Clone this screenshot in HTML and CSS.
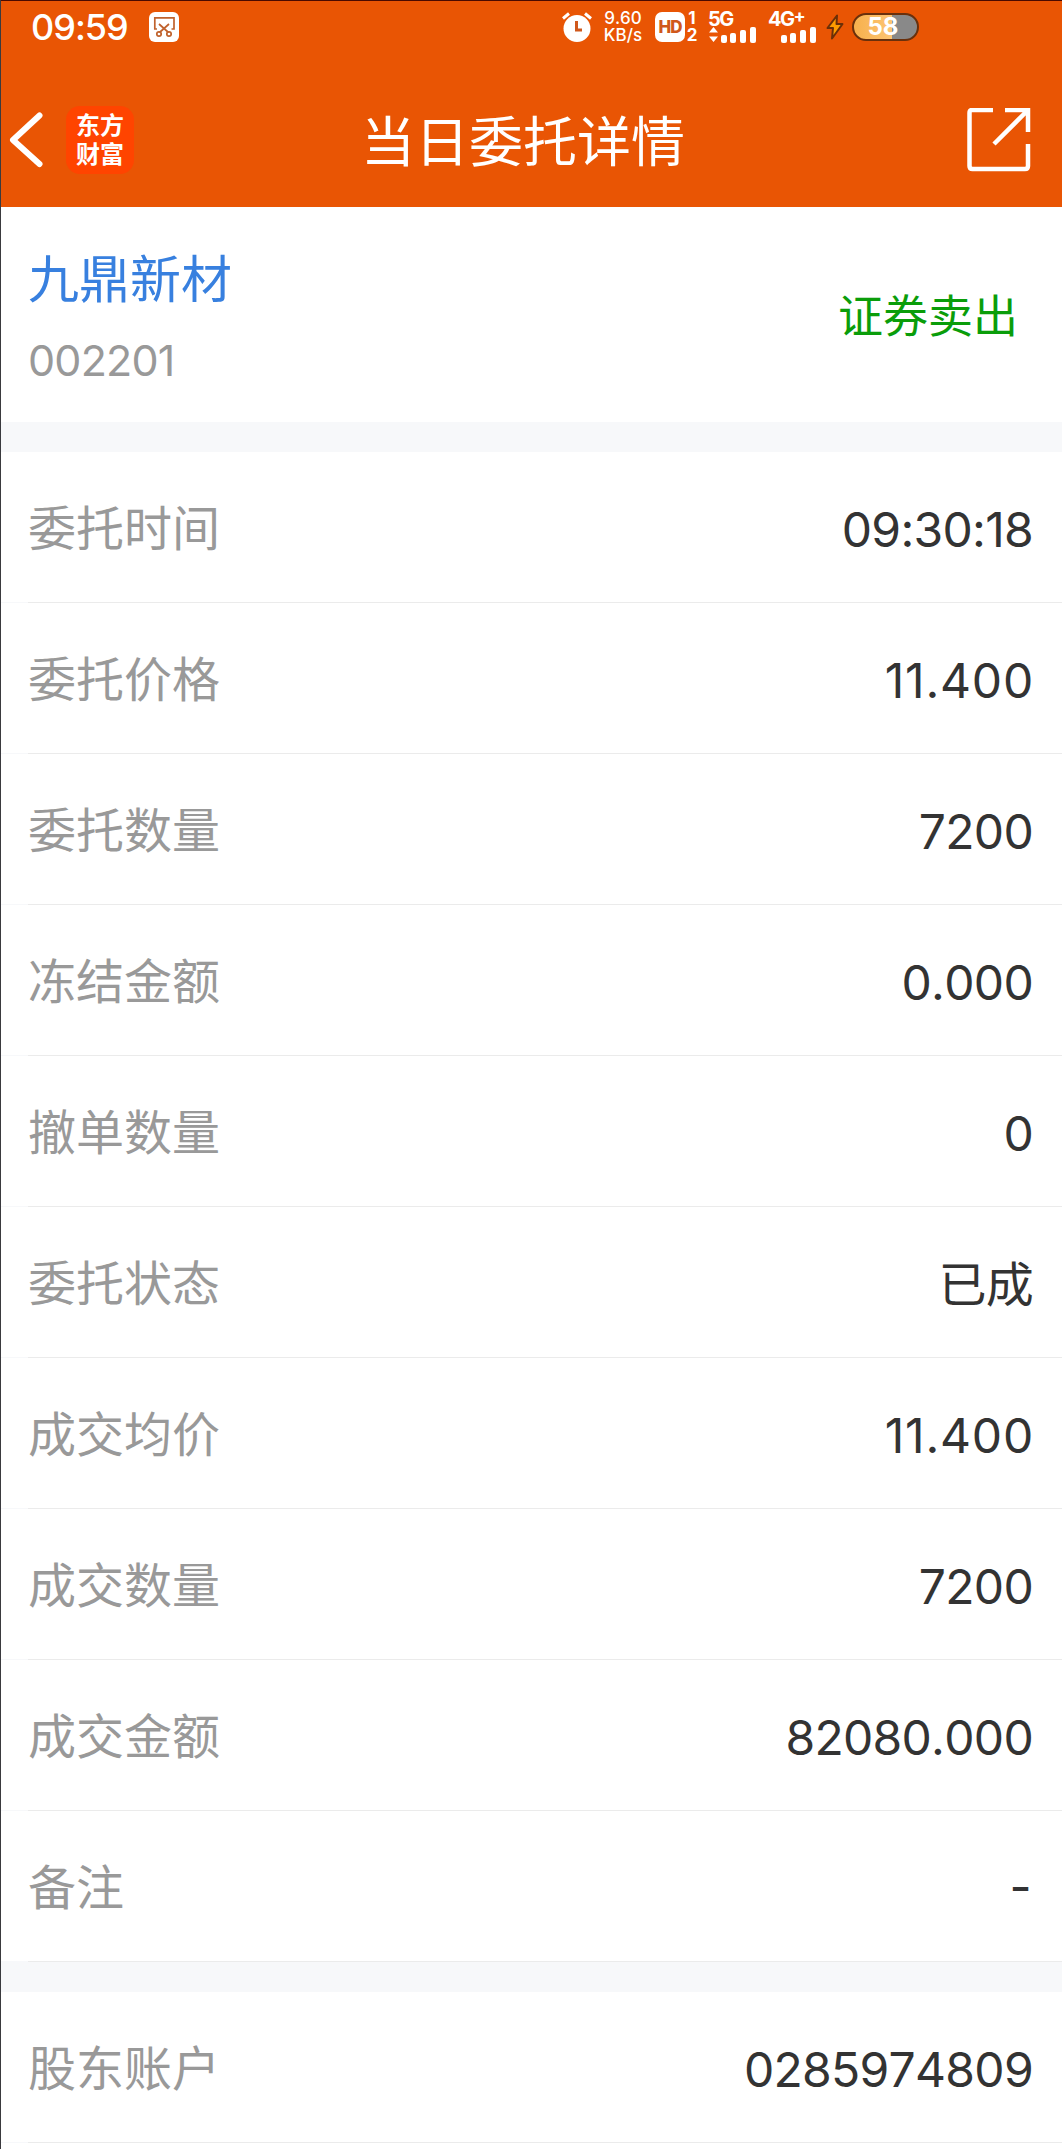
FILE: index.html
```html
<!DOCTYPE html>
<html lang="zh-CN">
<head>
  <meta charset="utf-8">
  <title>当日委托详情</title>
  <link rel="stylesheet" href="styles.css">
</head>
<body>
  <div class="page">
    <header class="header">
      <div class="status-bar">
        <span class="clock">09:59</span>
        <svg class="clip-icon" width="30" height="30" viewBox="0 0 30 30">
          <rect width="30" height="30" rx="6" fill="#fff"/>
          <g fill="none" stroke="#c0622d" stroke-width="1.7">
            <path d="M8 17H5.8V5.8H25V17H22.500"/>
            <path d="M10 12L19.500 20.500M20 12L10.500 20.500"/>
            <circle cx="10" cy="22" r="2.200"/>
            <circle cx="20" cy="22" r="2.200"/>
          </g>
        </svg>
        <svg class="alarm-icon" width="30" height="30" viewBox="0 0 30 30">
          <circle cx="15" cy="16.500" r="13.500" fill="#fff"/>
          <path d="M1 6.500L7 1.500M29 6.500L23 1.500" stroke="#fff" stroke-width="3"/>
          <path d="M14.500 9V18H20" fill="none" stroke="#d0581c" stroke-width="3"/>
        </svg>
        <div class="speed"><span>9.60</span><span>KB/s</span></div>
        <span class="hd">HD</span>
        <div class="sims"><span>1</span><span>2</span></div>
        <div class="signal signal-5g">
          <span>5G</span>
          <svg width="48" height="17" viewBox="0 0 48 17" fill="#fff">
            <path d="M1 6.500L5.500 1L10 6.500ZM1 10.500H10L5.500 16Z"/>
            <rect x="13" y="9" width="6" height="8" rx="2"/>
            <rect x="22" y="7" width="6" height="10" rx="2"/>
            <rect x="32" y="4" width="6" height="13" rx="2"/>
            <rect x="42" y="1" width="6" height="16" rx="2"/>
          </svg>
        </div>
        <div class="signal signal-4g">
          <span>4G<sup>+</sup></span>
          <svg width="48" height="17" viewBox="0 0 48 17" fill="#fff">
            <rect x="13" y="9" width="6" height="8" rx="2"/>
            <rect x="22" y="7" width="6" height="10" rx="2"/>
            <rect x="32" y="4" width="6" height="13" rx="2"/>
            <rect x="42" y="1" width="6" height="16" rx="2"/>
          </svg>
        </div>
        <svg class="bolt-icon" width="18" height="26" viewBox="0 0 18 26">
          <path d="M11 1.500L1.500 14H7L6 24.500L16.500 10H10.500Z" fill="#ff9c00" stroke="#6b2f08" stroke-width="2" stroke-linejoin="round"/>
        </svg>
        <span class="battery">58</span>
      </div>
      <div class="nav-bar">
        <svg class="back-icon" width="34" height="56" viewBox="0 0 34 56">
          <path d="M30.500 3.500L4 28L30.500 52" fill="none" stroke="#fff" stroke-width="6" stroke-linecap="round" stroke-linejoin="round"/>
        </svg>
        <div class="logo"><span>东方</span><span>财富</span></div>
        <h1 class="title">当日委托详情</h1>
        <svg class="share-icon" width="64" height="64" viewBox="0 0 64 64">
          <path d="M26 2H5Q2.500 2 2.500 5V58Q2.500 61 5.500 61H58Q61 61 61 58V36M38 2H61V24M60 3L27 36" fill="none" stroke="#fff" stroke-width="4.500"/>
        </svg>
      </div>
    </header>

    <section class="stock">
      <div>
        <div class="stock-name">九鼎新材</div>
        <div class="stock-code">002201</div>
      </div>
      <div class="side">证券卖出</div>
    </section>

    <ul class="list">
      <li class="row"><span class="label">委托时间</span><span class="value">09:30:18</span></li>
      <li class="row"><span class="label">委托价格</span><span class="value price">11.400</span></li>
      <li class="row"><span class="label">委托数量</span><span class="value">7200</span></li>
      <li class="row"><span class="label">冻结金额</span><span class="value">0.000</span></li>
      <li class="row"><span class="label">撤单数量</span><span class="value">0</span></li>
      <li class="row"><span class="label">委托状态</span><span class="value">已成</span></li>
      <li class="row"><span class="label">成交均价</span><span class="value price">11.400</span></li>
      <li class="row"><span class="label">成交数量</span><span class="value">7200</span></li>
      <li class="row"><span class="label">成交金额</span><span class="value">82080.000</span></li>
      <li class="row"><span class="label">备注</span><span class="value dash">-</span></li>
    </ul>

    <ul class="list">
      <li class="row"><span class="label">股东账户</span><span class="value">0285974809</span></li>
    </ul>
  </div>
</body>
</html>
```
FILE: styles.css
```css
* {
  box-sizing: border-box;
}

body {
  margin: 0;
  background-color: #ffffff;
  font-family: Inter, "Noto Sans CJK SC", sans-serif;
  font-kerning: none;
  overflow: hidden;
}

.page {
  height: 2149px;
  border-left: 1px solid #3a3a3e;
  overflow: hidden;
}

.header {
  height: 207px;
  margin-left: -1px;
  border-top: 1px solid #4a0a00;
  border-left: 1px solid #4a0a00;
  background-color: #e95504;
  color: #ffffff;
}

.status-bar {
  display: flex;
  align-items: center;
  height: 52px;
  padding-left: 30px;
}

.clock {
  width: 97px;
  font-size: 36px;
  font-weight: 500;
  line-height: 52px;
  letter-spacing: -1px;
}

.clip-icon {
  margin-left: 21px;
}

.alarm-icon {
  margin-left: 383px;
}

.speed {
  display: flex;
  flex-direction: column;
  align-items: center;
  width: 40px;
  margin-left: 11px;
  font-size: 17px;
  font-weight: 500;
  line-height: 17px;
}

.hd {
  width: 30px;
  height: 30px;
  margin-left: 12px;
  border-radius: 7px;
  background-color: #ffffff;
  color: #d0581c;
  font-size: 17px;
  font-weight: 800;
  line-height: 30px;
  letter-spacing: -1px;
  text-align: center;
}

.sims {
  display: flex;
  flex-direction: column;
  align-items: center;
  width: 12px;
  margin-left: 1px;
  font-size: 17px;
  font-weight: 700;
  line-height: 17px;
}

.signal {
  width: 48px;
  height: 32px;
  font-size: 20px;
  font-weight: 700;
  line-height: 16px;
  white-space: nowrap;
}

.signal span,
.signal svg {
  display: block;
}

.signal span {
  height: 15px;
  letter-spacing: -1.5px;
}

.signal sup {
  font-size: 18px;
  line-height: 0;
  vertical-align: 4px;
}

.signal-5g {
  margin-left: 10px;
}

.signal-4g {
  margin-left: 12px;
}

.bolt-icon {
  margin-left: 10px;
}

.battery {
  width: 67px;
  height: 28px;
  margin-left: 8px;
  padding-right: 5px;
  border: 2px solid #69300c;
  border-radius: 14px;
  background: linear-gradient(to right, #f7b04c, #fdc574 60%, #898989 60%);
  font-size: 24px;
  font-weight: 700;
  line-height: 24px;
  text-align: center;
}

.nav-bar {
  display: flex;
  align-items: center;
  height: 154px;
  padding: 12px 31px 0 8px;
}

.back-icon {
  margin-top: 8px;
}

.logo {
  display: flex;
  flex-direction: column;
  align-items: center;
  width: 68px;
  height: 68px;
  margin: 7px 0 0 23px;
  padding-top: 3px;
  border-radius: 14px;
  background-color: #ff4400;
  font-family: "Noto Sans CJK SC", sans-serif;
  font-size: 24px;
  font-weight: 700;
  line-height: 29px;
}

.title {
  flex: 1;
  margin: 14px 0 0 227px;
  font-size: 54px;
  font-weight: 400;
  line-height: 70px;
}

.share-icon {
  margin-top: 7px;
}

.stock {
  display: flex;
  justify-content: space-between;
  height: 215px;
  padding: 41px 44px 0 27px;
}

.stock-name {
  color: #3880df;
  font-size: 51px;
  line-height: 64px;
}

.stock-code {
  margin-top: 19px;
  color: #999999;
  font-size: 43px;
  line-height: 58px;
  letter-spacing: -0.8px;
}

.side {
  margin-top: 38px;
  color: #0a9d0a;
  font-size: 45px;
  line-height: 62px;
}

.list {
  margin: 0;
  padding: 0;
  border-top: 30px solid #f7f8fa;
  list-style: none;
}

/* the divider is fainter under the left padding */
.row {
  display: flex;
  justify-content: space-between;
  height: 151px;
  padding: 0 29px 0 27px;
  background: linear-gradient(to right, #f7f8fa 27px, #ebebeb 27px) left bottom / 100% 1px no-repeat;
  font-size: 48px;
  line-height: 155px;
}

.label {
  color: #999999;
  line-height: 153px;
}

.value {
  color: #333333;
  letter-spacing: -0.7px;
}

.price {
  margin-right: -1px;
  letter-spacing: 0.8px;
}

.dash {
  padding-right: 2px;
  line-height: 151px;
}
```
